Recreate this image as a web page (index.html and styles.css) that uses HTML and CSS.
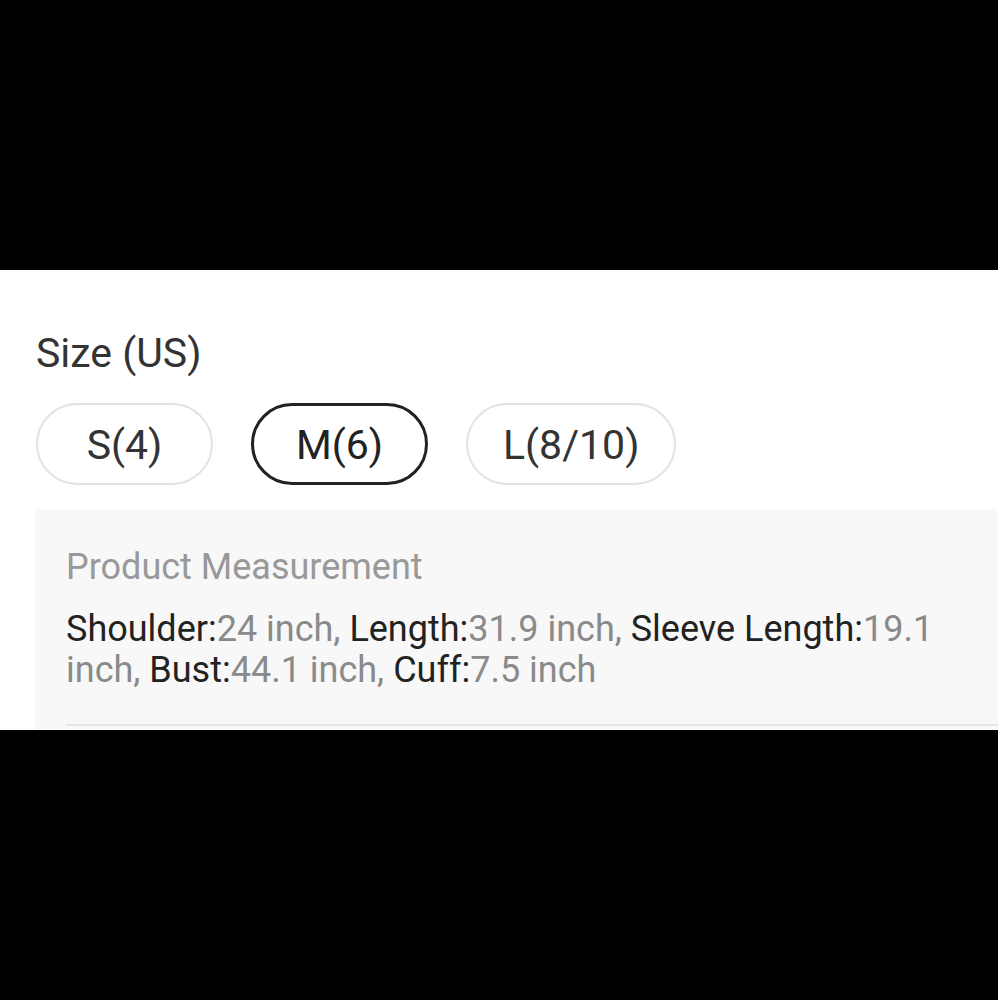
FILE: index.html
```html
<!DOCTYPE html>
<html lang="en">
<head>
  <meta charset="UTF-8" />
  <meta name="viewport" content="width=device-width, initial-scale=1" />
  <title>Size (US)</title>
  <link rel="stylesheet" href="styles.css">
</head>
<body>
  <div class="sheet">
    <!-- size picker -->
    <h3 class="size-title">Size (US)</h3>
    <div class="size-list">
      <button class="size-pill">S(4)</button>
      <button class="size-pill active">M(6)</button>
      <button class="size-pill">L(8/10)</button>
    </div>

    <!-- measurement of the picked size -->
    <div class="measure">
      <p class="measure-title">Product Measurement</p>
      <p class="measure-text"><span class="key">Shoulder:</span>24 inch, <span class="key">Length:</span>31.9 inch, <span class="key">Sleeve Length:</span>19.1 inch, <span class="key">Bust:</span>44.1 inch, <span class="key">Cuff:</span>7.5 inch</p>
      <div class="measure-line"></div>
    </div>
  </div>
</body>
</html>
```

FILE: styles.css
```css
body {
  margin: 0;
  background: #000;
  font-family: Roboto, 'Noto Sans', sans-serif;
}

.sheet {
  margin-top: 270px;
  height: 460px;
  background: #fff;
  overflow: hidden;
}

.size-title {
  margin: 59px 0 0 36px;
  font-size: 41px;
  line-height: 48px;
  font-weight: 400;
  color: #333;
}

.size-list {
  display: flex;
  gap: 38px;
  margin: 26px 0 0 36px;
}

.size-pill {
  box-sizing: border-box;
  min-width: 177px;
  height: 82px;
  padding: 2px 35px 0;
  border: 2px solid #e3e3e3;
  border-radius: 41px;
  background: #fff;
  font-family: inherit;
  font-size: 41px;
  line-height: 48px;
  color: #333;
}

.size-pill.active {
  border: 3px solid #222;
  color: #222;
}

.measure {
  margin: 24px 0 0 35px;
  padding: 38px 40px 0 31px;
  background: #f8f8f8;
  height: 300px;
}

.measure-title {
  margin: 0;
  font-size: 36px;
  line-height: 40px;
  color: #999;
}

.measure-text {
  margin: 22px 0 0;
  font-size: 36px;
  line-height: 41px;
  color: #8a8a8a;
}

.measure-text .key {
  color: #222;
}

.measure-line {
  margin-top: 33px;
  margin-right: -40px;
  height: 2px;
  background: #e6e6e6;
}
```
